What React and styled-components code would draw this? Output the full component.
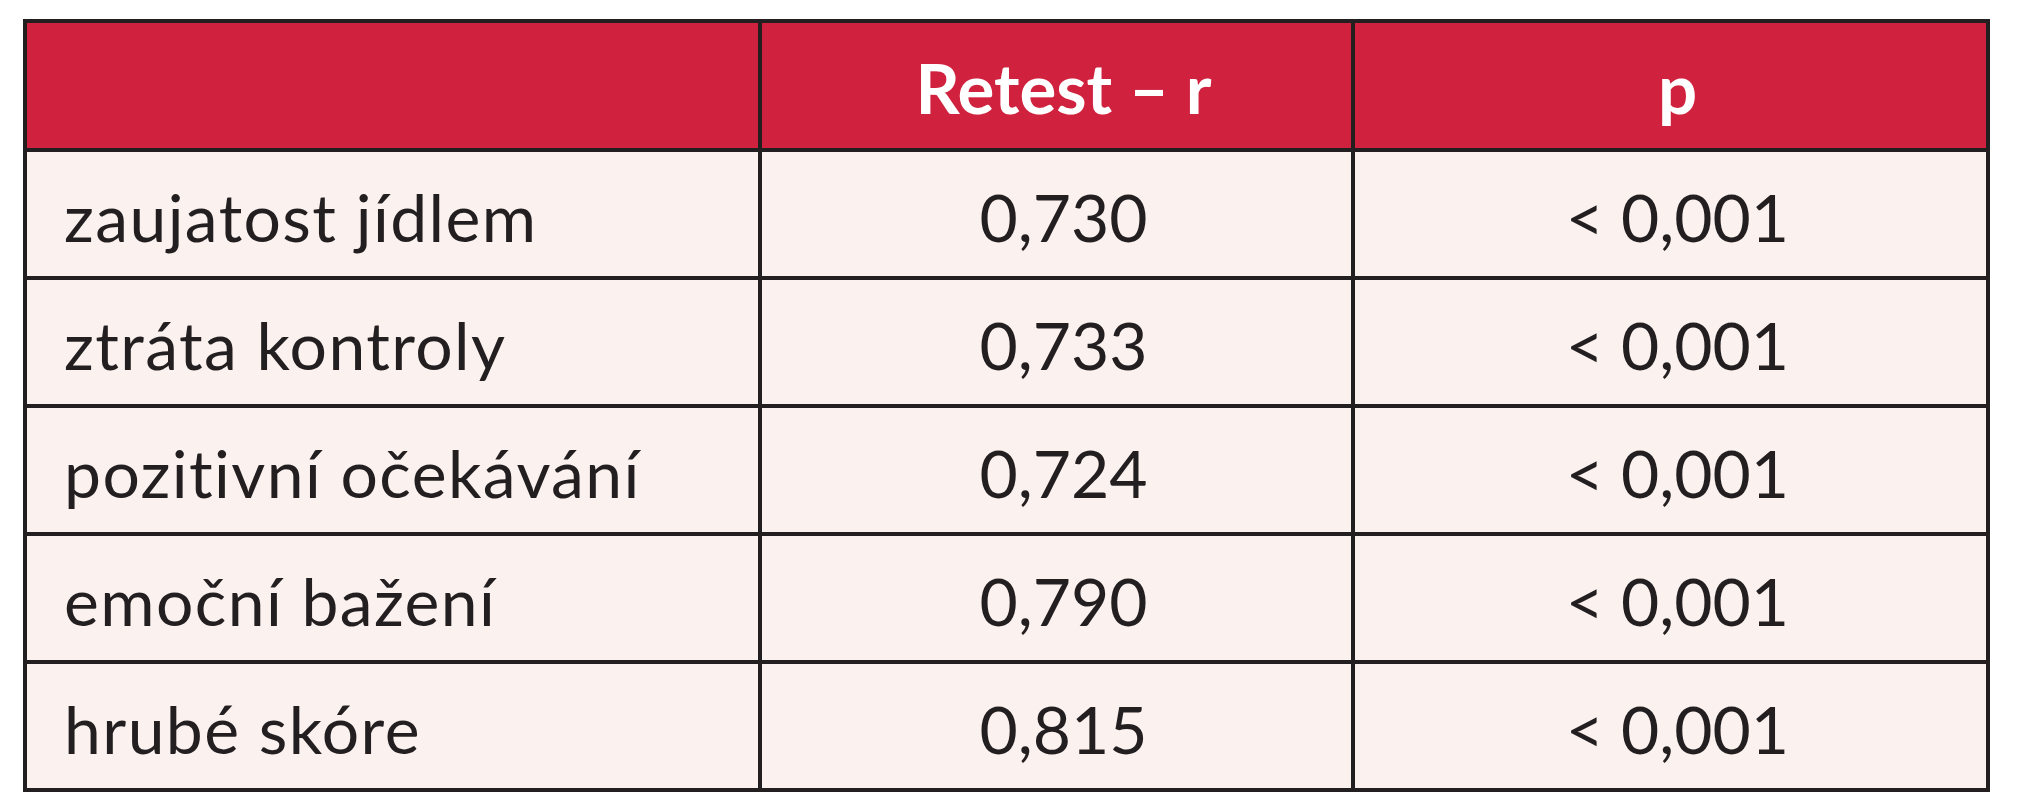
import React from "react";
import styled, { createGlobalStyle } from "styled-components";

const Global = createGlobalStyle`
  html, body { margin: 0; padding: 0; background: #ffffff; }
  body { font-family: Lato, "Open Sans", sans-serif; }
`;

const Page = styled.div`
  padding: 19px 0 0 23px;
`;

const Table = styled.div`
  display: grid;
  width: 1967px;
  box-sizing: border-box;
  grid-template-columns: 731px 589px 631px;
  grid-template-rows: 125px repeat(5, 124px);
  gap: 4px;
  border: 4px solid #231f20;
  background: #231f20;
`;

const HeadCell = styled.div`
  background: #d0223e;
  color: #ffffff;
  font-family: Lato, sans-serif;
  font-weight: 700;
  font-size: 69px;
  display: flex;
  align-items: center;
  justify-content: center;
  padding: 4px 0 0 14px;
  box-sizing: border-box;
`;

const Cell = styled.div`
  background: #fbf2f0;
  color: #231f20;
  font-family: Lato, sans-serif;
  font-weight: 400;
  font-size: 66px;
  display: flex;
  align-items: center;
  justify-content: ${(p) => (p.$align === "left" ? "flex-start" : "center")};
  padding: ${(p) => (p.$align === "left" ? "4px 0 0 37px" : "4px 0 0 14px")};
  letter-spacing: ${(p) => (p.$align === "left" ? "1.4px" : "0")};
  box-sizing: border-box;
  white-space: nowrap;
`;

const rows = [
  ["zaujatost jídlem", "0,730", "< 0,001"],
  ["ztráta kontroly", "0,733", "< 0,001"],
  ["pozitivní očekávání", "0,724", "< 0,001"],
  ["emoční bažení", "0,790", "< 0,001"],
  ["hrubé skóre", "0,815", "< 0,001"],
];

export default function App() {
  return (
    <Page>
      <Global />
      <Table>
        <HeadCell />
        <HeadCell>Retest – r</HeadCell>
        <HeadCell>p</HeadCell>
        {rows.map((r) => (
          <React.Fragment key={r[0]}>
            <Cell $align="left">{r[0]}</Cell>
            <Cell>{r[1]}</Cell>
            <Cell>{r[2]}</Cell>
          </React.Fragment>
        ))}
      </Table>
    </Page>
  );
}
